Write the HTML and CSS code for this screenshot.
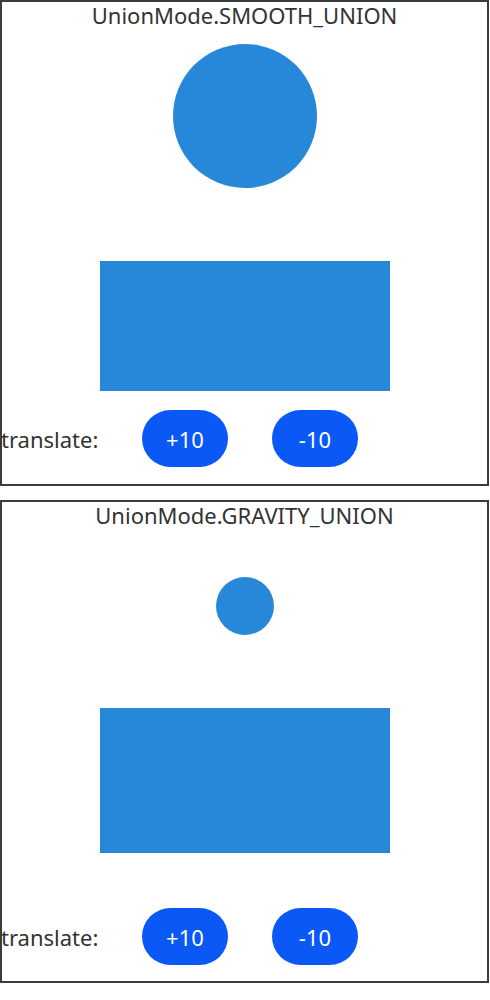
FILE: index.html
```html
<!DOCTYPE html>
<html lang="en">
<head>
    <meta charset="UTF-8">
    <meta name="viewport" content="width=device-width, initial-scale=1.0">
    <title>UnionMode</title>
    <link rel="stylesheet" href="styles.css">
</head>
<body>
    <div class="panel smooth">
        <p class="title">UnionMode.SMOOTH_UNION</p>
        <div class="shapes">
            <div class="circle"></div>
            <div class="rect"></div>
        </div>
        <div class="controls">
            <span class="label">translate:</span>
            <button class="btn">+10</button>
            <button class="btn">-10</button>
        </div>
    </div>

    <div class="panel gravity">
        <p class="title">UnionMode.GRAVITY_UNION</p>
        <div class="shapes">
            <div class="circle"></div>
            <div class="rect"></div>
        </div>
        <div class="controls">
            <span class="label">translate:</span>
            <button class="btn">+10</button>
            <button class="btn">-10</button>
        </div>
    </div>
</body>
</html>
```

FILE: styles.css
```css
body {
    font-family: "Noto Sans", Roboto, sans-serif;
    background-color: #fff;
    color: #333;
    margin: 0;
    padding: 0;
}

.panel {
    width: 489px;
    box-sizing: border-box;
    border: 2px solid #3c3c3c;
    display: flex;
    flex-direction: column;
}

.gravity {
    margin-top: 14px;
}

.title {
    margin: 0;
    height: 30px;
    line-height: 26px;
    font-size: 22px;
    text-align: center;
}

.shapes {
    display: flex;
    flex-direction: column;
    align-items: center;
}

.circle {
    border-radius: 50%;
    background-color: #2787d9;
}

.rect {
    width: 290px;
    margin-top: 73px;
    background-color: #2787d9;
}

.smooth .circle {
    width: 144px;
    height: 144px;
    margin-top: 12px;
}

.smooth .rect {
    height: 130px;
}

.gravity .circle {
    width: 58px;
    height: 58px;
    margin-top: 45px;
}

.gravity .rect {
    height: 145px;
}

.controls {
    display: flex;
    align-items: center;
    margin-top: 19px;
    margin-bottom: 17px;
}

.gravity .controls {
    margin-top: 55px;
    margin-bottom: 16px;
}

.label {
    font-size: 22px;
    width: 141px;
    margin-left: -1px;
}

.btn {
    font-family: "Noto Sans", Roboto, sans-serif;
    font-size: 22px;
    color: #fff;
    background-color: #0a59f7;
    border: none;
    border-radius: 29px;
    width: 86px;
    height: 57px;
    padding: 0;
    cursor: pointer;
}

.btn + .btn {
    margin-left: 44px;
}
```
